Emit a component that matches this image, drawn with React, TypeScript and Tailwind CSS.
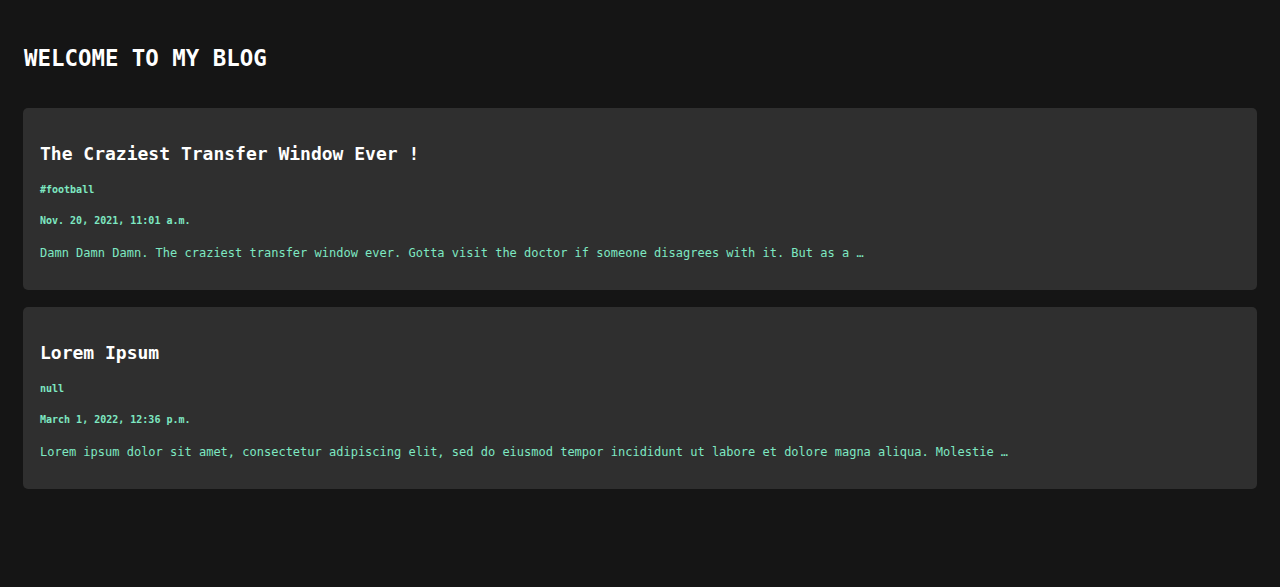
const posts = [
  {
    title: "The Craziest Transfer Window Ever !",
    tag: "#football",
    date: "Nov. 20, 2021, 11:01 a.m.",
    excerpt:
      "Damn Damn Damn. The craziest transfer window ever. Gotta visit the doctor if someone disagrees with it. But as a …",
  },
  {
    title: "Lorem Ipsum",
    tag: "null",
    date: "March 1, 2022, 12:36 p.m.",
    excerpt:
      "Lorem ipsum dolor sit amet, consectetur adipiscing elit, sed do eiusmod tempor incididunt ut labore et dolore magna aliqua. Molestie …",
  },
];

export default function App() {
  return (
    <div className="min-h-[587px] bg-[#151515] px-[23px] pt-[44px] font-['DejaVu_Sans_Mono',monospace]">
      <h1 className="pl-px text-[22.4px] font-bold leading-[28px] text-white">WELCOME TO MY BLOG</h1>

      <div className="mt-[36px] flex flex-col gap-[17px]">
        {posts.map((post) => (
          <div
            key={post.title}
            className="flex flex-col gap-[17px] rounded-[5px] bg-[#2f2f2f] px-[17px] pb-[29px] pt-[34px]"
          >
            <h2 className="text-[18px] font-bold leading-[24px] text-white">{post.title}</h2>
            <p className="text-[10px] font-bold leading-[14px] text-[#7ee8c2]">{post.tag}</p>
            <p className="text-[10px] font-bold leading-[14px] text-[#7ee8c2]">{post.date}</p>
            <p className="text-[12px] leading-[16px] text-[#7ee8c2]">{post.excerpt}</p>
          </div>
        ))}
      </div>
    </div>
  );
}
